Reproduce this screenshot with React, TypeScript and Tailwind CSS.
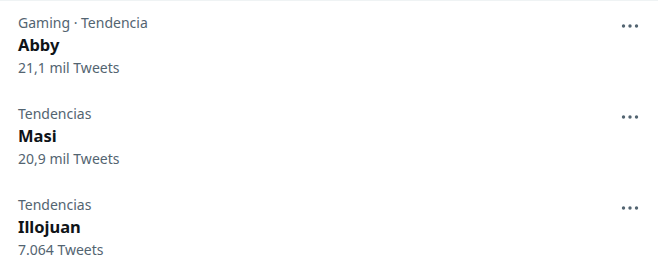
import React from "react";

const trends = [
  { cat: "Gaming · Tendencia", title: "Abby", count: "21,1 mil Tweets" },
  { cat: "Tendencias", title: "Masi", count: "20,9 mil Tweets" },
  { cat: "Tendencias", title: "Illojuan", count: "7.064 Tweets" },
];

function Dots() {
  return (
    <svg width="20" height="6" viewBox="0 0 20 6" className="block">
      <circle cx="3.5" cy="3" r="1.7" fill="#536471" />
      <circle cx="10" cy="3" r="1.7" fill="#536471" />
      <circle cx="16.5" cy="3" r="1.7" fill="#536471" />
    </svg>
  );
}

export default function App() {
  return (
    <div
      className="w-[658px] h-[278px] bg-white border-t border-[#eff3f4] overflow-hidden"
      style={{ fontFamily: '"Segoe UI", "Noto Sans", sans-serif' }}
    >
      {trends.map((t) => (
        <div key={t.title} className="flex h-[91px] pl-[18px] pr-[18px] pt-[12px]">
          <div className="flex flex-col flex-1">
            <div className="text-[14px] leading-[20px] text-[#536471]">{t.cat}</div>
            <div className="mt-[2px] text-[16.5px] leading-[20px] font-bold text-[#0f1419]">{t.title}</div>
            <div className="mt-[5px] text-[14px] leading-[16px] text-[#536471]">{t.count}</div>
          </div>
          <div className="pt-[10px]">
            <Dots />
          </div>
        </div>
      ))}
    </div>
  );
}
